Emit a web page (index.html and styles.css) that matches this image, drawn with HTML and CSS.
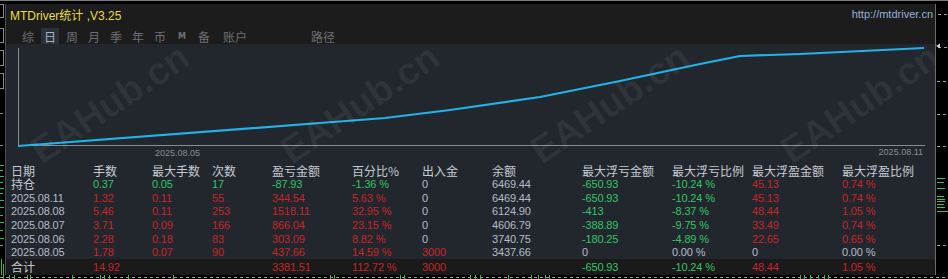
FILE: index.html
```html
<!DOCTYPE html>
<html lang="zh">
<head>
<meta charset="utf-8">
<title>MTDriver统计</title>
<link rel="stylesheet" href="styles.css">
</head>
<body>
<div class="screen">
  <div class="topline"></div>
  <div class="main">
    <div class="lstrip">
      <svg width="5" height="271" viewBox="0 0 5 271">
        <g fill="none" stroke="#8a8a8a" stroke-width="1">
          <rect x="-3" y="0.5" width="6.5" height="13"/>
          <rect x="-3" y="24.5" width="6.5" height="14"/>
          <rect x="-3" y="46.5" width="6.5" height="15"/>
          <rect x="-3" y="69.5" width="6.5" height="15"/>
        </g>
        <g stroke="#8a8a8a"><line x1="0" y1="109.5" x2="3" y2="109.5"/><line x1="0" y1="141.5" x2="3" y2="141.5"/><line x1="0" y1="241.5" x2="3" y2="241.5"/></g>
        <g stroke="#2fbf3a">
          <line x1="0" y1="161.5" x2="4" y2="161.5"/><line x1="0" y1="166.5" x2="3" y2="166.5"/>
          <line x1="0" y1="172.5" x2="4" y2="172.5"/><line x1="0" y1="178.5" x2="3" y2="178.5"/>
          <line x1="0" y1="184.5" x2="4" y2="184.5"/><line x1="0" y1="189.5" x2="3" y2="189.5"/>
          <line x1="0" y1="196.5" x2="4" y2="196.5"/><line x1="0" y1="203.5" x2="4" y2="203.5"/>
          <line x1="0" y1="211.5" x2="3" y2="211.5"/><line x1="0" y1="218.5" x2="4" y2="218.5"/>
          <line x1="0" y1="226.5" x2="3" y2="226.5"/><line x1="0" y1="234.5" x2="4" y2="234.5"/>
          <line x1="1.5" y1="255" x2="1.5" y2="271"/><line x1="3.5" y1="260" x2="3.5" y2="271"/>
        </g>
      </svg>
    </div>
    <div class="panel">
      <div class="head">
        <div class="titlerow">
          <span class="title">MTDriver统计 ,V3.25</span>
          <span class="url">http://mtdriver.cn</span>
        </div>
        <div class="tabs">
          <span class="tab">综</span>
          <span class="tab active">日</span>
          <span class="tab">周</span>
          <span class="tab">月</span>
          <span class="tab">季</span>
          <span class="tab">年</span>
          <span class="tab">币</span>
          <span class="tab tab-m">M</span>
          <span class="tab">备</span>
          <span class="tab tab-wide">账户</span>
          <span class="tab tab-path">路径</span>
        </div>
      </div>
      <div class="body">
        <svg class="chart" width="929" height="119" viewBox="0 0 929 119">
          <g stroke="#868c94" stroke-width="1" fill="none">
            <line x1="12.5" y1="4" x2="12.5" y2="102"/>
            <line x1="12" y1="101.5" x2="919" y2="101.5"/>
          </g>
          <polyline fill="none" stroke="#22b2ea" stroke-width="2.2" stroke-linejoin="round"
            points="12,102 314,79 379,74 444,66 534,53 614,37 694,20 734,12 794,10 918,4"/>
          <text class="axis-label" x="149" y="112">2025.08.05</text>
          <text class="axis-label" x="917" y="111" text-anchor="end">2025.08.11</text>
        </svg>
        <div class="table">
          <div class="row head-row">
            <span>日期</span><span>手数</span><span>最大手数</span><span>次数</span><span>盈亏金额</span><span>百分比%</span><span>出入金</span><span>余额</span><span>最大浮亏金额</span><span>最大浮亏比例</span><span>最大浮盈金额</span><span>最大浮盈比例</span>
          </div>
          <div class="row">
            <span class="cn">持仓</span><span class="g">0.37</span><span class="g">0.05</span><span class="g">17</span><span class="g">-87.93</span><span class="g">-1.36 %</span><span class="n">0</span><span class="n">6469.44</span><span class="g">-650.93</span><span class="g">-10.24 %</span><span class="r">45.13</span><span class="r">0.74 %</span>
          </div>
          <div class="row">
            <span class="n">2025.08.11</span><span class="r">1.32</span><span class="r">0.11</span><span class="r">55</span><span class="r">344.54</span><span class="r">5.63 %</span><span class="n">0</span><span class="n">6469.44</span><span class="g">-650.93</span><span class="g">-10.24 %</span><span class="r">45.13</span><span class="r">0.74 %</span>
          </div>
          <div class="row">
            <span class="n">2025.08.08</span><span class="r">5.46</span><span class="r">0.11</span><span class="r">253</span><span class="r">1518.11</span><span class="r">32.95 %</span><span class="n">0</span><span class="n">6124.90</span><span class="g">-413</span><span class="g">-8.37 %</span><span class="r">48.44</span><span class="r">1.05 %</span>
          </div>
          <div class="row">
            <span class="n">2025.08.07</span><span class="r">3.71</span><span class="r">0.09</span><span class="r">166</span><span class="r">866.04</span><span class="r">23.15 %</span><span class="n">0</span><span class="n">4606.79</span><span class="g">-388.89</span><span class="g">-9.75 %</span><span class="r">33.49</span><span class="r">0.74 %</span>
          </div>
          <div class="row">
            <span class="n">2025.08.06</span><span class="r">2.28</span><span class="r">0.18</span><span class="r">83</span><span class="r">303.09</span><span class="r">8.82 %</span><span class="n">0</span><span class="n">3740.75</span><span class="g">-180.25</span><span class="g">-4.89 %</span><span class="r">22.65</span><span class="r">0.65 %</span>
          </div>
          <div class="row">
            <span class="n">2025.08.05</span><span class="r">1.78</span><span class="r">0.07</span><span class="r">90</span><span class="r">437.66</span><span class="r">14.59 %</span><span class="r">3000</span><span class="n">3437.66</span><span class="n">0</span><span class="n">0.00 %</span><span class="n">0</span><span class="n">0.00 %</span>
          </div>
          <div class="row total">
            <span class="cn">合计</span><span class="r">14.92</span><span></span><span></span><span class="r">3381.51</span><span class="r">112.72 %</span><span class="r">3000</span><span></span><span class="g">-650.93</span><span class="g">-10.24 %</span><span class="r">48.44</span><span class="r">1.05 %</span>
          </div>
        </div>
      </div>
      <span class="wm wm1">EAHub.cn</span>
      <span class="wm wm2">EAHub.cn</span>
      <span class="wm wm3">EAHub.cn</span>
      <span class="wm wm4">EAHub.cn</span>
    </div>
    <div class="rstrip">
      <svg width="12" height="271" viewBox="0 0 12 271">
        <g stroke="#a0a0a0" stroke-dasharray="3 3">
          <line x1="2" y1="10.5" x2="12" y2="10.5"/>
          <line x1="2" y1="43.5" x2="12" y2="43.5"/>
          <line x1="1" y1="77.5" x2="12" y2="77.5"/>
          <line x1="1" y1="110.5" x2="12" y2="110.5"/>
          <line x1="1" y1="142.5" x2="12" y2="142.5"/>
          <line x1="1" y1="241.5" x2="12" y2="241.5"/>
        </g>
        <polygon points="0,42 4,39.5 4,44.5" fill="#d0d0d0"/>
        <g stroke="#3cc24a">
          <line x1="1" y1="174.5" x2="9" y2="174.5"/>
          <line x1="1" y1="178.5" x2="8" y2="178.5"/>
          <line x1="1" y1="184.5" x2="9" y2="184.5"/>
          <line x1="1" y1="192.5" x2="8" y2="192.5"/>
          <line x1="1" y1="195.5" x2="9" y2="195.5"/>
          <line x1="1" y1="197.5" x2="9" y2="197.5"/>
          <line x1="1" y1="200.5" x2="8" y2="200.5"/>
          <line x1="1" y1="203.5" x2="9" y2="203.5"/>
          <line x1="1" y1="207.5" x2="12" y2="207.5"/>
        </g>
      </svg>
    </div>
  </div>
  <div class="bottom">
    <svg width="948" height="4" viewBox="0 0 948 4">
      <line x1="0" y1="2.5" x2="948" y2="2.5" stroke="#a0a0a0" stroke-dasharray="3 3"/>
      <g stroke="#38c244">
        <line x1="3.5" y1="0" x2="3.5" y2="4"/><line x1="9.5" y1="0" x2="9.5" y2="4"/><line x1="14.5" y1="0" x2="14.5" y2="4"/>
        <line x1="27.5" y1="0" x2="27.5" y2="4"/><line x1="30.5" y1="0" x2="30.5" y2="4"/>
        <line x1="72.5" y1="0" x2="72.5" y2="4"/><line x1="100.5" y1="0" x2="100.5" y2="4"/><line x1="104.5" y1="0" x2="104.5" y2="4"/>
        <line x1="109.5" y1="0" x2="109.5" y2="4"/><line x1="128.5" y1="0" x2="128.5" y2="4"/>
        <line x1="173.5" y1="0" x2="173.5" y2="4"/><line x1="330.5" y1="0" x2="330.5" y2="4"/><line x1="334.5" y1="0" x2="334.5" y2="4"/>
        <line x1="400.5" y1="0" x2="400.5" y2="4"/><line x1="404.5" y1="0" x2="404.5" y2="4"/><line x1="470.5" y1="0" x2="470.5" y2="4"/>
        <line x1="475.5" y1="0" x2="475.5" y2="4"/><line x1="480.5" y1="0" x2="480.5" y2="4"/>
        <line x1="508.5" y1="0" x2="508.5" y2="4"/><line x1="531.5" y1="0" x2="531.5" y2="4"/><line x1="538.5" y1="0" x2="538.5" y2="4"/>
        <line x1="545.5" y1="0" x2="545.5" y2="4"/><line x1="549.5" y1="0" x2="549.5" y2="4"/>
        <line x1="800.5" y1="0" x2="800.5" y2="4"/><line x1="804.5" y1="0" x2="804.5" y2="4"/><line x1="810.5" y1="0" x2="810.5" y2="4"/>
        <line x1="818.5" y1="0" x2="818.5" y2="4"/><line x1="824.5" y1="0" x2="824.5" y2="4"/><line x1="828.5" y1="0" x2="828.5" y2="4"/>
      </g>
    </svg>
  </div>
</div>
</body>
</html>
```
FILE: styles.css
```css
* { box-sizing: border-box; }
html, body { margin: 0; padding: 0; background: #000; }
body { width: 948px; height: 279px; overflow: hidden; }

.screen {
  width: 948px;
  height: 279px;
  display: flex;
  flex-direction: column;
  background: #000;
  font-family: "Liberation Sans", Arial, "Noto Sans CJK SC", sans-serif;
}
.topline { height: 1px; background: #7a7a7a; margin-bottom: 3px; flex: none; }
.main { display: flex; height: 271px; flex: none; }
.lstrip { width: 5px; flex: none; }
.lstrip svg, .rstrip svg, .bottom svg { display: block; }
.rstrip { flex: 1; }
.bottom { height: 4px; flex: none; }

.panel {
  position: relative;
  width: 931px;
  flex: none;
  border-left: 1px solid #4c4c4c;
  border-right: 1px solid #6c6c6c;
  display: flex;
  flex-direction: column;
  overflow: hidden;
  background: #22272e;
}

.head { height: 40px; background: #1c1c1c; flex: none; }
.titlerow {
  height: 20px;
  display: flex;
  justify-content: space-between;
  align-items: center;
  padding: 0 2px 0 4px;
}
.title { color: #e6de4a; font-size: 12px; font-family: "Liberation Sans", Arial, "Noto Sans CJK SC", sans-serif; }
.url { color: #93b3d6; font-size: 11px; }

.tabs {
  margin-top: 4px;
  height: 16px;
  display: flex;
  align-items: stretch;
  padding-left: 13px;
}
.tab {
  width: 18px;
  margin-right: 4px;
  display: flex;
  align-items: center;
  justify-content: center;
  color: #6c7076;
  font-size: 12px;
  font-family: "Noto Sans CJK SC", sans-serif;
}
.tab.active { background: #2b3139; color: #a9b4c2; }
.tab-m { font-family: "DejaVu Sans", sans-serif; font-weight: bold; font-size: 8px; }
.tab-wide { width: 36px; }
.tab-path { width: 26px; margin-left: 53px; }

.body { flex: 1; display: flex; flex-direction: column; }
.chart { display: block; flex: none; }
.axis-label { font-family: "Liberation Sans", Arial, sans-serif; font-size: 9px; fill: #878d95; }

.table { display: flex; flex-direction: column; }
.row {
  display: grid;
  grid-template-columns: 82px 59px 60px 60px 80px 70px 70px 90px 90px 80px 90px 1fr;
  padding-left: 5px;
  height: 13.7px;
  align-items: center;
  font-size: 11px;
  letter-spacing: -0.15px;
  white-space: nowrap;
}
.row span { line-height: 12px; height: 12px; overflow: visible; }
.head-row {
  height: 14px;
  color: #c6cad0;
  font-family: "Noto Sans CJK SC", sans-serif;
  font-size: 12px;
  letter-spacing: 0;
}
.head-row span { line-height: 13px; height: 13px; }
.total { height: 15.8px; background: #1a1a1a; }
.cn { color: #c6cad0; font-family: "Noto Sans CJK SC", sans-serif; font-size: 12px; letter-spacing: 0; }
.g { color: #34c468; }
.r { color: #c8242a; }
.n { color: #b4bcc8; }

.wm {
  position: absolute;
  font-family: "Liberation Sans", Arial, sans-serif;
  font-weight: bold;
  font-size: 38px;
  line-height: 38px;
  color: rgba(255, 255, 255, 0.06);
  transform-origin: 0 100%;
  transform: rotate(-34deg);
  pointer-events: none;
  white-space: nowrap;
}
.wm1 { left: 39px; top: 128px; }
.wm2 { left: 289px; top: 128px; }
.wm3 { left: 539px; top: 128px; }
.wm4 { left: 789px; top: 128px; }
```
